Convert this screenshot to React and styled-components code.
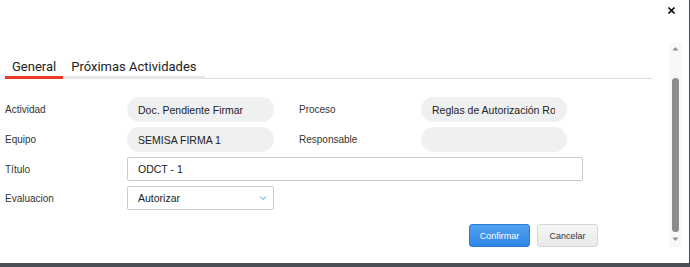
import React from 'react'
import styled, { createGlobalStyle } from 'styled-components'

const GlobalStyle = createGlobalStyle`
  html, body {
    margin: 0;
    padding: 0;
    background: #4b5058;
  }
  body {
    font-family: "Liberation Sans", Arial, sans-serif;
  }
`

const Modal = styled.div`
  width: 689px;
  height: 263px;
  background: #fff;
  display: flex;
  flex-direction: column;
  overflow: hidden;
`

const Header = styled.div`
  height: 43px;
  box-sizing: border-box;
  display: flex;
  justify-content: flex-end;
  align-items: flex-start;
  padding: 7px 14px 0 0;
`

const CloseButton = styled.button`
  border: 0;
  background: none;
  padding: 0;
  width: 7px;
  height: 7px;
  display: flex;
  cursor: pointer;
`

const BodyRow = styled.div`
  flex: 1;
  display: flex;
`

const Content = styled.div`
  width: 669px;
  box-sizing: border-box;
  padding: 16px 0 0 5px;
`

const TabList = styled.div`
  width: 647px;
  display: flex;
  border-bottom: 1px solid #dddddd;
`

const Tab = styled.div`
  font-family: Roboto, sans-serif;
  font-size: 13px;
  line-height: 16px;
  color: #222;
  padding: 0 ${p => p.$pad}px 1px;
  border-bottom: 3px solid ${p => (p.$active ? '#e8392a' : '#e6e6e6')};
  margin-bottom: -1px;
`

const Form = styled.div`
  margin-top: 18px;
  display: flex;
  flex-direction: column;
  gap: 5px;
`

const Row = styled.div`
  display: flex;
  align-items: center;
  height: ${p => p.$h}px;
`

const Label = styled.div`
  width: 122px;
  flex: none;
  font-size: 10px;
  color: #333;
  margin-left: ${p => p.$offset || 0}px;
`

const Pill = styled.div`
  width: ${p => p.$w}px;
  height: 25px;
  box-sizing: border-box;
  border-radius: 13px;
  background: #eff0f2;
  padding: 0 12px 0 11px;
  display: flex;
  align-items: center;
`

const PillText = styled.span`
  flex: 1;
  min-width: 0;
  font-size: 10.5px;
  color: #222;
  white-space: nowrap;
  overflow: hidden;
`

const TextInput = styled.div`
  width: ${p => p.$w}px;
  height: 24px;
  box-sizing: border-box;
  border: 1px solid #cccccc;
  border-radius: 2px;
  padding-left: 10px;
  font-size: 10.5px;
  color: #222;
  display: flex;
  align-items: center;
`

const Select = styled(TextInput)`
  justify-content: space-between;
  padding-right: 6px;
`

const Actions = styled.div`
  width: 593px;
  margin-top: 14px;
  display: flex;
  justify-content: flex-end;
  gap: 7px;
`

const Button = styled.button`
  width: 61px;
  height: 23px;
  border-radius: 3px;
  font-family: "Liberation Sans", Arial, sans-serif;
  font-size: 9px;
  padding: 0;
  cursor: pointer;
  border: 1px solid ${p => (p.$primary ? '#2b7ad4' : '#d6d6d6')};
  color: ${p => (p.$primary ? '#fff' : '#333')};
  background: ${p =>
    p.$primary
      ? 'linear-gradient(#52a2f3, #2f86e7)'
      : 'linear-gradient(#f6f6f6, #e9e9e9)'};
`

const Scrollbar = styled.div`
  width: 13px;
  height: 204px;
  box-sizing: border-box;
  background: #f8f8f8;
  display: flex;
  flex-direction: column;
  align-items: center;
  padding: 3px 0 5px;
`

const Thumb = styled.div`
  width: 7px;
  height: 154px;
  border-radius: 4px;
  background: #8c8c8c;
  margin: 26px 0 4px;
`

const Arrow = ({ down }) => (
  <svg width="7" height="6" viewBox="0 0 7 6">
    <path d={down ? 'M0.5 1.5 L6.5 1.5 L3.5 5 Z' : 'M0.5 4.5 L6.5 4.5 L3.5 1 Z'} fill="#8f8f8f" />
  </svg>
)

const Chevron = () => (
  <svg width="8" height="6" viewBox="0 0 8 6">
    <path d="M1 1.5 L4 4.5 L7 1.5" fill="none" stroke="#4a8fd8" strokeWidth="1" />
  </svg>
)

const App = () => (
  <>
    <GlobalStyle />
    <Modal>
      <Header>
        <CloseButton aria-label="Cerrar">
          <svg width="7" height="7" viewBox="0 0 7 7">
            <path d="M0.5 0.5 L6.5 6.5 M6.5 0.5 L0.5 6.5" stroke="#111" strokeWidth="1.6" />
          </svg>
        </CloseButton>
      </Header>
      <BodyRow>
        <Content>
          <TabList>
            <Tab $active $pad={7}>General</Tab>
            <Tab $pad={8}>Próximas Actividades</Tab>
          </TabList>
          <Form>
            <Row $h={25}>
              <Label>Actividad</Label>
              <Pill $w={147}><PillText>Doc. Pendiente Firmar</PillText></Pill>
              <Label $offset={25}>Proceso</Label>
              <Pill $w={146}><PillText>Reglas de Autorización Roles</PillText></Pill>
            </Row>
            <Row $h={25}>
              <Label>Equipo</Label>
              <Pill $w={147}><PillText>SEMISA FIRMA 1</PillText></Pill>
              <Label $offset={25}>Responsable</Label>
              <Pill $w={146}><PillText /></Pill>
            </Row>
            <Row $h={24}>
              <Label>Título</Label>
              <TextInput $w={456}>ODCT - 1</TextInput>
            </Row>
            <Row $h={24}>
              <Label>Evaluacion</Label>
              <Select $w={147}>
                Autorizar
                <Chevron />
              </Select>
            </Row>
          </Form>
          <Actions>
            <Button $primary>Confirmar</Button>
            <Button>Cancelar</Button>
          </Actions>
        </Content>
        <Scrollbar>
          <Arrow />
          <Thumb />
          <Arrow down />
        </Scrollbar>
      </BodyRow>
    </Modal>
  </>
)

export default App
